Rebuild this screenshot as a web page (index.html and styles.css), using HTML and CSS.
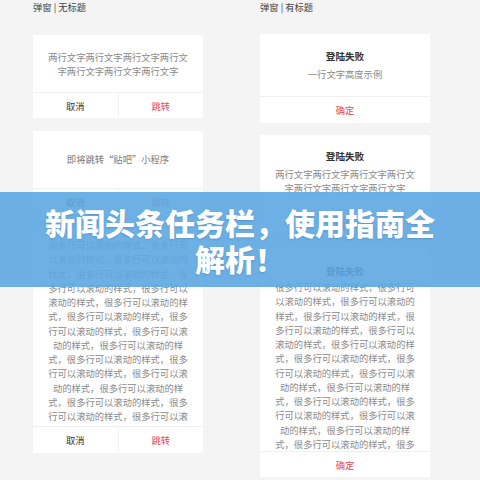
FILE: index.html
```html
<!DOCTYPE html>
<html lang="zh-CN">
<head>
<meta charset="utf-8">
<title>弹窗</title>
<link rel="stylesheet" href="styles.css">
</head>
<body>
<div class="page">
  <div class="col col-left">
    <div class="col-title">弹窗 | 无标题</div>
    <div class="card">
      <div class="body body-two">两行文字两行文字两行文字两行文字两行文字两行文字两行文字</div>
      <div class="foot"><span class="btn">取消</span><span class="btn btn-red">跳转</span></div>
    </div>
    <div class="card">
      <div class="body body-one">即将跳转“贴吧”小程序</div>
      <div class="foot"><span class="btn">取消</span><span class="btn btn-red">跳转</span></div>
    </div>
    <div class="card">
      <div class="body body-scroll">
        <div class="scroll scroll-left">很多行可以滚动的样式，很多行可以滚动的样式，很多行可以滚动的样式，很多行可以滚动的样式，很多行可以滚动的样式，很多行可以滚动的样式，很多行可以滚动的样式，很多行可以滚动的样式，很多行可以滚动的样式，很多行可以滚动的样式，很多行可以滚动的样式，很多行可以滚动的样式，很多行可以滚动的样式，很多行可以滚动的样式，很多行可以滚动的样式，很多行可以滚动的样式，很多行可以滚动的样式，很多行可以滚</div>
      </div>
      <div class="foot foot-tall"><span class="btn">取消</span><span class="btn btn-red">跳转</span></div>
    </div>
  </div>
  <div class="col col-right">
    <div class="col-title">弹窗 | 有标题</div>
    <div class="card">
      <div class="body body-t1">
        <div class="title">登陆失败</div>
        <div class="sub">一行文字高度示例</div>
      </div>
      <div class="foot foot-tall"><span class="btn btn-red">确定</span></div>
    </div>
    <div class="card">
      <div class="body body-t2">
        <div class="title">登陆失败</div>
        <div class="sub">两行文字两行文字两行文字两行文字两行文字两行文字两行文字</div>
      </div>
      <div class="foot foot-tall"><span class="btn btn-red">确定</span></div>
    </div>
    <div class="card">
      <div class="body body-t3">
        <div class="title">登陆失败</div>
        <div class="scroll scroll-right">很多行可以滚动的样式，很多行可以滚动的样式，很多行可以滚动的样式，很多行可以滚动的样式，很多行可以滚动的样式，很多行可以滚动的样式，很多行可以滚动的样式，很多行可以滚动的样式，很多行可以滚动的样式，很多行可以滚动的样式，很多行可以滚动的样式，很多行可以滚动的样式，很多行可以滚动的样式，很多行可以滚动的样式，很多行可以滚动的样式，很多行可以滚动的样式，很多</div>
      </div>
      <div class="foot"><span class="btn btn-red">确定</span></div>
    </div>
  </div>
</div>
<div class="banner">新闻头条任务栏，使用指南全<br>解析！</div>
</body>
</html>
```

FILE: styles.css
```css
html, body {
  margin: 0;
  padding: 0;
}
body {
  width: 480px;
  height: 480px;
  overflow: hidden;
  background: #f4f4f4;
  font-family: "Noto Sans CJK SC", "Noto Sans", sans-serif;
  position: relative;
}
.page {
  display: grid;
  grid-template-columns: 170px 170px;
  column-gap: 57px;
  padding-left: 33px;
}
.col {
  display: flex;
  flex-direction: column;
}
.col-left { gap: 13px; }
.col-right { gap: 12px; }
.col-title {
  font-size: 9.3px;
  line-height: 14px;
  color: #444;
  margin-bottom: 8px;
}
.card {
  background: #fff;
  display: flex;
  flex-direction: column;
}
.body {
  font-size: 9.3px;
  color: #8a8a8a;
  text-align: center;
}
.body-two {
  padding: 16px 15px 14px;
  line-height: 13.5px;
  height: 27px;
}
.body-one {
  padding: 21px 15px 22px;
  line-height: 14px;
  color: #777;
}
.body-scroll {
  padding: 11px 15px 0;
}
.scroll {
  overflow: hidden;
  line-height: 14.25px;
}
.scroll-left { height: 188px; }
.scroll-right { height: 171px; margin-top: 2px; }
.title {
  font-size: 9.6px;
  line-height: 14px;
  color: #333;
  font-weight: 700;
}
.sub {
  margin-top: 4px;
  line-height: 14px;
}
.body-t1 { padding: 15px 15px 15px; }
.body-t2 { padding: 14px 15px 15px; }
.body-t3 { padding: 15px 15px 0; }
.foot {
  display: flex;
  border-top: 1px solid #f0f0f0;
  height: 25px;
}
.foot-tall { height: 26px; }
.btn {
  flex: 1;
  display: flex;
  align-items: center;
  justify-content: center;
  font-size: 9.3px;
  color: #333;
}
.btn + .btn {
  border-left: 1px solid #f3f3f3;
}
.btn-red { color: #e5474f; }
.banner {
  position: absolute;
  left: 0;
  top: 192px;
  width: 480px;
  height: 95px;
  box-sizing: border-box;
  padding-top: 12px;
  background: rgba(92, 167, 226, 0.9);
  color: #fff;
  text-align: center;
  font-size: 30px;
  line-height: 36px;
  font-weight: 900;
  text-shadow: 0 1px 2px rgba(40, 80, 120, 0.25);
}
```
